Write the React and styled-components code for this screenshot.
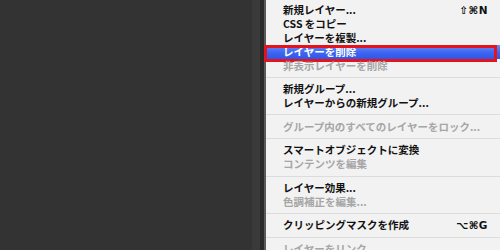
import React from 'react'
import styled, { createGlobalStyle } from 'styled-components'

const GlobalStyle = createGlobalStyle`
  html, body {
    margin: 0;
    padding: 0;
    background: #333333;
  }
`

//whole 500x250 frame
const Screen = styled.div`
  display: flex;
  width: 500px;
  height: 250px;
  overflow: hidden;
  background: #333333;
`

const Canvas = styled.div`
  width: 252px;
  flex-shrink: 0;
  background: #333333;
`

const Gutter = styled.div`
  width: 8px;
  flex-shrink: 0;
  background: #3a3a3a;
`

const Edge = styled.div`
  width: 4px;
  flex-shrink: 0;
  background: #2b2b2b;
`

const Menu = styled.ul`
  flex: 1;
  margin: 0;
  padding: 2.5px 0 0;
  list-style: none;
  background: #f2f2f2;
  border-left: 2px solid #5a5a5a;
  font-family: "Noto Sans CJK JP", "DejaVu Sans", sans-serif;
  font-size: 10.5px;
  font-weight: 600;
`

const Item = styled.li`
  position: relative;
  display: flex;
  justify-content: space-between;
  align-items: center;
  height: 14px;
  line-height: 14px;
  padding: 0 12px 0 17px;
  white-space: nowrap;
  color: ${p => (p.$active ? '#ffffff' : p.$disabled ? '#a6a6a6' : '#111111')};
  background: ${p => (p.$active ? 'linear-gradient(#6a8cf7, #3d65f0 55%, #2c57ea)' : 'transparent')};

  /* red annotation frame around the selected row */
  ${p => p.$active && `
    &::after {
      content: '';
      position: absolute;
      left: -2px;
      right: 3px;
      top: 0;
      bottom: -3px;
      border: 3px solid #e5141c;
    }
  `}
`

const Label = styled.span`
  line-height: 14px;
`

const Shortcut = styled.span`
  font-family: "DejaVu Sans", sans-serif;
  font-size: 10.5px;
  font-weight: 700;
  letter-spacing: 0.5px;
`

const Separator = styled.li`
  display: flex;
  align-items: center;
  height: 9.6px;
  &::before {
    content: '';
    flex: 1;
    height: 1px;
    background: #dcdcdc;
  }
`

const items = [
  { label: '新規レイヤー...', shortcut: '⇧⌘N' },
  { label: 'CSS をコピー' },
  { label: 'レイヤーを複製...' },
  { label: 'レイヤーを削除', active: true },
  { label: '非表示レイヤーを削除', disabled: true },
  'sep',
  { label: '新規グループ...' },
  { label: 'レイヤーからの新規グループ...' },
  'sep',
  { label: 'グループ内のすべてのレイヤーをロック...', disabled: true },
  'sep',
  { label: 'スマートオブジェクトに変換' },
  { label: 'コンテンツを編集', disabled: true },
  'sep',
  { label: 'レイヤー効果...' },
  { label: '色調補正を編集...', disabled: true },
  'sep',
  { label: 'クリッピングマスクを作成', shortcut: '⌥⌘G' },
  'sep',
  { label: 'レイヤーをリンク', disabled: true },
]

export default function App() {
  return (
    <>
      <GlobalStyle />
      <Screen>
        <Canvas />
        <Gutter />
        <Edge />
        <Menu>
          {items.map((item, index) =>
            item === 'sep' ? (
              <Separator key={index} />
            ) : (
              <Item key={index} $active={item.active} $disabled={item.disabled}>
                <Label>{item.label}</Label>
                {item.shortcut && <Shortcut>{item.shortcut}</Shortcut>}
              </Item>
            )
          )}
        </Menu>
      </Screen>
    </>
  )
}
